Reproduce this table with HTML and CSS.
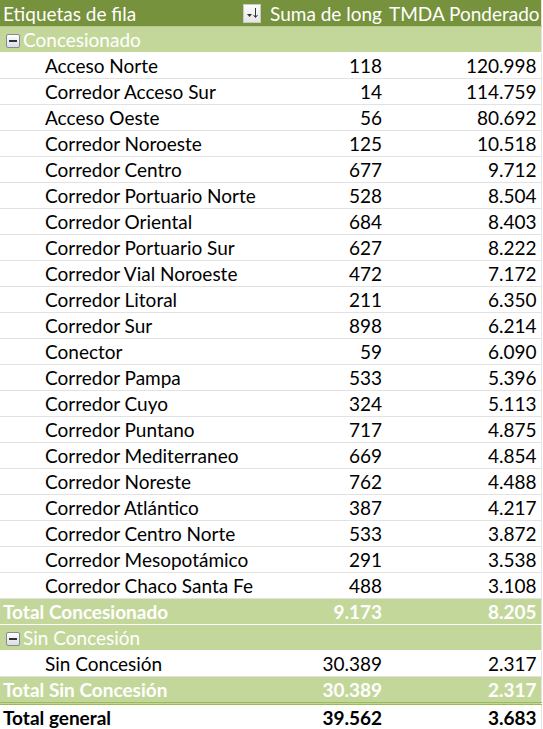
FILE: index.html
```html
<!DOCTYPE html>
<html lang="es">
<head>
    <meta charset="UTF-8">
    <title>Tabla dinámica - Corredores</title>
    <link rel="stylesheet" href="styles.css">
</head>
<body>
    <table class="pivot">
        <colgroup>
            <col class="col-label">
            <col class="col-long">
            <col class="col-tmda">
        </colgroup>
        <thead>
            <tr class="head">
                <th class="label">
                    <div class="head-label">
                        <span>Etiquetas de fila</span>
                        <span class="filter-btn">
                            <svg width="14" height="14" viewBox="0 0 14 14">
                                <path d="M2 8h5l-2.5 3z" fill="#333"/>
                                <path d="M10.5 2v9" stroke="#333" stroke-width="1"/>
                                <path d="M8.5 9l2 2.5 2-2.5" stroke="#333" stroke-width="1" fill="none"/>
                            </svg>
                        </span>
                    </div>
                </th>
                <th class="num">Suma de long</th>
                <th class="num">TMDA Ponderado</th>
            </tr>
        </thead>
        <tbody>
            <tr class="group">
                <td colspan="3"><span class="toggle"></span>Concesionado</td>
            </tr>
            <tr><td class="item">Acceso Norte</td><td class="num">118</td><td class="num">120.998</td></tr>
            <tr><td class="item">Corredor Acceso Sur</td><td class="num">14</td><td class="num">114.759</td></tr>
            <tr><td class="item">Acceso Oeste</td><td class="num">56</td><td class="num">80.692</td></tr>
            <tr><td class="item">Corredor Noroeste</td><td class="num">125</td><td class="num">10.518</td></tr>
            <tr><td class="item">Corredor Centro</td><td class="num">677</td><td class="num">9.712</td></tr>
            <tr><td class="item">Corredor Portuario Norte</td><td class="num">528</td><td class="num">8.504</td></tr>
            <tr><td class="item">Corredor Oriental</td><td class="num">684</td><td class="num">8.403</td></tr>
            <tr><td class="item">Corredor Portuario Sur</td><td class="num">627</td><td class="num">8.222</td></tr>
            <tr><td class="item">Corredor Vial Noroeste</td><td class="num">472</td><td class="num">7.172</td></tr>
            <tr><td class="item">Corredor Litoral</td><td class="num">211</td><td class="num">6.350</td></tr>
            <tr><td class="item">Corredor Sur</td><td class="num">898</td><td class="num">6.214</td></tr>
            <tr><td class="item">Conector</td><td class="num">59</td><td class="num">6.090</td></tr>
            <tr><td class="item">Corredor Pampa</td><td class="num">533</td><td class="num">5.396</td></tr>
            <tr><td class="item">Corredor Cuyo</td><td class="num">324</td><td class="num">5.113</td></tr>
            <tr><td class="item">Corredor Puntano</td><td class="num">717</td><td class="num">4.875</td></tr>
            <tr><td class="item">Corredor Mediterraneo</td><td class="num">669</td><td class="num">4.854</td></tr>
            <tr><td class="item">Corredor Noreste</td><td class="num">762</td><td class="num">4.488</td></tr>
            <tr><td class="item">Corredor Atlántico</td><td class="num">387</td><td class="num">4.217</td></tr>
            <tr><td class="item">Corredor Centro Norte</td><td class="num">533</td><td class="num">3.872</td></tr>
            <tr><td class="item">Corredor Mesopotámico</td><td class="num">291</td><td class="num">3.538</td></tr>
            <tr><td class="item">Corredor Chaco Santa Fe</td><td class="num">488</td><td class="num">3.108</td></tr>
            <tr class="subtotal">
                <td>Total Concesionado</td><td class="num">9.173</td><td class="num">8.205</td>
            </tr>
            <tr class="group">
                <td colspan="3"><span class="toggle"></span>Sin Concesión</td>
            </tr>
            <tr><td class="item">Sin Concesión</td><td class="num">30.389</td><td class="num">2.317</td></tr>
            <tr class="subtotal">
                <td>Total Sin Concesión</td><td class="num">30.389</td><td class="num">2.317</td>
            </tr>
        </tbody>
        <tfoot>
            <tr class="grand">
                <td>Total general</td><td class="num">39.562</td><td class="num">3.683</td>
            </tr>
        </tfoot>
    </table>
</body>
</html>
```

FILE: styles.css
```css
/* Tabla dinámica estilo hoja de cálculo */
body {
    margin: 0;
    background-color: #fff;
    font-family: Lato, "Liberation Sans", sans-serif;
    font-size: 19px;
    color: #000;
}

.pivot {
    border-collapse: collapse;
    table-layout: fixed;
    width: 541px;
    border-right: 1px solid #e4e4e4;
}

.col-label {
    width: 262px;
}

.col-long {
    width: 124px;
}

.col-tmda {
    width: 155px;
}

.pivot th,
.pivot td {
    height: 25px;
    padding: 0 4px 0 3px;
    white-space: nowrap;
    border-bottom: 1px solid #e2e2e2;
    line-height: 25px;
}

.pivot th {
    font-weight: normal;
    text-align: left;
}

.pivot .num {
    text-align: right;
}

.head th {
    background-color: #76923c;
    color: #fff;
    height: 26px;
    border-bottom: 1px solid #b5c98e;
}

.head th.label {
    padding-right: 0;
}

.head-label {
    display: flex;
    justify-content: space-between;
    align-items: center;
}

.filter-btn {
    width: 18px;
    height: 19px;
    margin-right: 1px;
    display: flex;
    align-items: center;
    justify-content: center;
    background: linear-gradient(#fdfdfd, #e6e6e6);
    border: 1px solid #c9c9c9;
    box-sizing: border-box;
}

.group td {
    background-color: #c4d79b;
    color: #fff;
    border-bottom: 1px solid #fff;
}

.toggle {
    display: inline-block;
    position: relative;
    width: 12px;
    height: 12px;
    margin: 0 3px 0 3px;
    vertical-align: -1px;
    border: 1px solid #8a8a8a;
    border-radius: 2px;
    background: linear-gradient(#ffffff, #d9dde6);
}

.toggle::after {
    content: "";
    position: absolute;
    left: 2px;
    right: 2px;
    top: 5px;
    height: 2px;
    background-color: #333;
}

.item {
    padding-left: 45px !important;
}

.subtotal td {
    background-color: #c4d79b;
    color: #fff;
    font-weight: bold;
    border-bottom: 1px solid #fff;
}

.grand td {
    font-weight: bold;
    border-top: 3px double #9bbb59;
    border-bottom: 1px solid #e2e2e2;
}
```
